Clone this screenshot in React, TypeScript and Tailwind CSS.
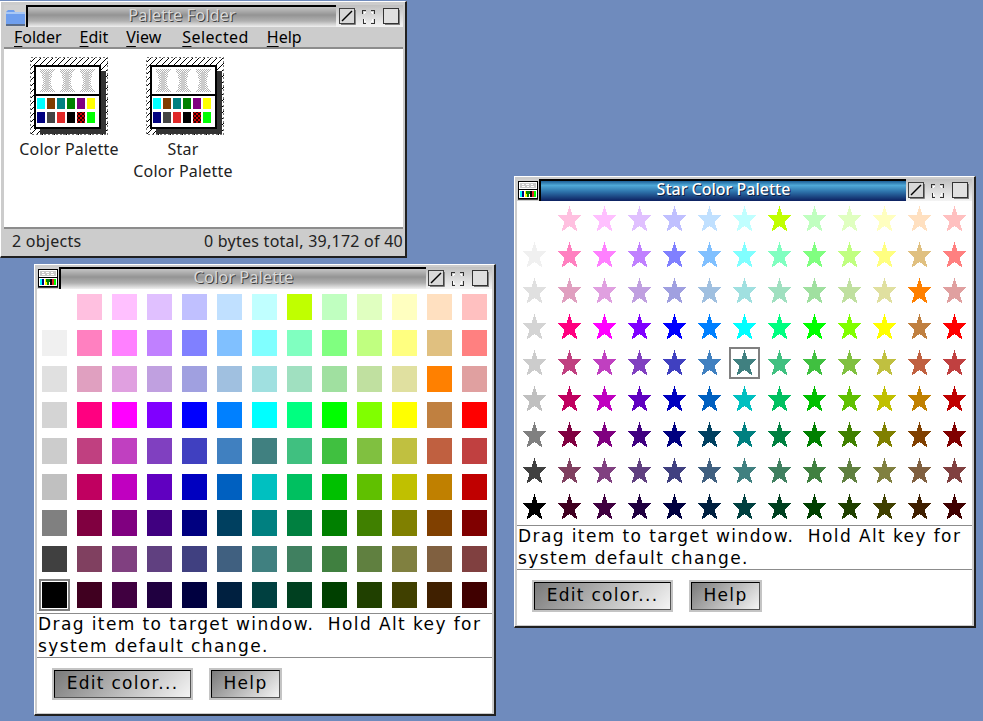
import type { ReactNode } from 'react'

const palette = [
  ['#ffffff', '#ffc0e0', '#ffc0ff', '#e0c0ff', '#c0c0ff', '#c0e0ff', '#c0ffff', '#c0ff00', '#c0ffc0', '#e0ffc0', '#ffffc0', '#ffe0c0', '#ffc0c0'],
  ['#f0f0f0', '#ff80c0', '#ff80ff', '#c080ff', '#8080ff', '#80c0ff', '#80ffff', '#80ffc0', '#80ff80', '#c0ff80', '#ffff80', '#e0c080', '#ff8080'],
  ['#e0e0e0', '#e0a0c0', '#e0a0e0', '#c0a0e0', '#a0a0e0', '#a0c0e0', '#a0e0e0', '#a0e0c0', '#a0e0a0', '#c0e0a0', '#e0e0a0', '#ff8000', '#e0a0a0'],
  ['#d4d4d4', '#ff0080', '#ff00ff', '#8000ff', '#0000ff', '#0080ff', '#00ffff', '#00ff80', '#00ff00', '#80ff00', '#ffff00', '#c08040', '#ff0000'],
  ['#cccccc', '#c04080', '#c040c0', '#8040c0', '#4040c0', '#4080c0', '#408080', '#40c080', '#40c040', '#80c040', '#c0c040', '#c06040', '#c04040'],
  ['#c0c0c0', '#c00060', '#c000c0', '#6000c0', '#0000c0', '#0060c0', '#00c0c0', '#00c060', '#00c000', '#60c000', '#c0c000', '#c08000', '#c00000'],
  ['#808080', '#800040', '#800080', '#400080', '#000080', '#004060', '#008080', '#008040', '#008000', '#408000', '#808000', '#804000', '#800000'],
  ['#404040', '#804060', '#804080', '#604080', '#404080', '#406080', '#408080', '#408060', '#408040', '#608040', '#808040', '#806040', '#804040'],
  ['#000000', '#400020', '#400040', '#200040', '#000040', '#002040', '#004040', '#004020', '#004000', '#204000', '#404000', '#402000', '#400000'],
]

const iconColors = [
  ['#00ffff', '#803c00', '#008080', '#008000', '#800080', '#ffff00'],
  ['#000080', '#444444', '#e02828', '#000000', 'url(#redcheck)', '#00ff00'],
]

function FolderGlyph() {
  return (
    <svg width="21" height="21" viewBox="0 0 21 21" className="shrink-0">
      <path d="M1 6 L3 4 H9 L10 6 H19 L20 7 V18 H1 Z" fill="#6f9fee" />
      <rect x="1" y="6" width="19" height="2" fill="#a9c8f5" />
      <rect x="1" y="18" width="19" height="2" fill="#5a6c88" />
    </svg>
  )
}

function MiniPaletteGlyph() {
  const colors = ['#00ffff', '#000080', '#ffff00', '#008000', '#000000', '#e02828', '#00ff00']
  return (
    <svg width="20" height="20" viewBox="0 0 20 20" className="shrink-0" shapeRendering="crispEdges">
      <rect x="0.5" y="1.5" width="19" height="17" fill="#ffffff" stroke="#000000" />
      <rect x="2" y="3" width="16" height="5" fill="#c8c8c8" />
      <path d="M4 4h2M8 4h3M13 4h2M4 6h3M9 6h2M13 6h3" stroke="#ffffff" />
      <rect x="0" y="9" width="20" height="1" fill="#000000" />
      {colors.map((c, i) => (
        <rect key={i} x={2 + i * 2.4} y="11" width="2" height="6" fill={c} />
      ))}
      <rect x="8" y="11" width="4" height="3" fill="#008000" />
      <rect x="0" y="19" width="20" height="1" fill="#404040" />
    </svg>
  )
}

function PaletteIcon() {
  return (
    <svg width="78" height="78" viewBox="0 0 78 78" shapeRendering="crispEdges">
      <defs>
        <pattern id="hatch" width="6" height="6" patternUnits="userSpaceOnUse">
          <rect width="6" height="6" fill="#ffffff" />
          <path d="M0 6 L6 0 M-1 1 L1 -1 M5 7 L7 5" stroke="#000000" strokeWidth="1.4" />
        </pattern>
        <pattern id="dither" width="2" height="2" patternUnits="userSpaceOnUse">
          <rect width="2" height="2" fill="#ffffff" />
          <rect width="1" height="1" fill="#b4b4b4" />
          <rect x="1" y="1" width="1" height="1" fill="#b4b4b4" />
        </pattern>
        <pattern id="redcheck" width="4" height="4" patternUnits="userSpaceOnUse">
          <rect width="4" height="4" fill="#d00000" />
          <rect width="2" height="2" fill="#200000" />
          <rect x="2" y="2" width="2" height="2" fill="#200000" />
        </pattern>
      </defs>
      <rect x="0.5" y="0.5" width="77" height="77" fill="url(#hatch)" stroke="#777777" strokeDasharray="2 2" />
      <rect x="10" y="14" width="66" height="63" fill="#333333" />
      <rect x="5" y="9" width="65" height="62" fill="#ffffff" stroke="#000000" strokeWidth="2" />
      <rect x="5" y="37" width="65" height="2" fill="#000000" />
      {[0, 1, 2].map((i) => (
        <g key={i}>
          <path
            d={`M${9 + i * 20} 12 h16 l-3 5 l-1 7 l1 7 l3 4 h-16 l3 -4 l1 -7 l-1 -7 Z`}
            fill="url(#dither)"
          />
          <rect x={15 + i * 20} y="15" width="4" height="18" fill="#cccccc" />
        </g>
      ))}
      {iconColors.map((row, r) =>
        row.map((c, i) => (
          <rect key={c + r} x={7 + i * 10} y={41 + r * 14} width="8" height="11" fill={c} />
        )),
      )}
    </svg>
  )
}

function TitleButtons() {
  return (
    <div className="flex items-center justify-end gap-[6px]">
      <svg width="17" height="17" viewBox="0 0 17 17">
        <rect x="0.5" y="0.5" width="15" height="15" fill="#d8d8d8" stroke="#404040" />
        <path d="M3 13 L13 3" stroke="#000000" strokeWidth="1.4" />
        <path d="M16.5 2 V16.5 H2" stroke="#808080" fill="none" />
      </svg>
      <svg width="13" height="15" viewBox="0 0 13 15" shapeRendering="crispEdges">
        <path d="M0 5V1H4M9 1H12V5M12 10V14H9M4 14H1V10" stroke="#333333" fill="none" />
        <path d="M2 5V3H4M9 3H10V5M10 10V12H9M4 12H2V10" stroke="#ffffff" fill="none" />
      </svg>
      <svg width="17" height="17" viewBox="0 0 17 17" shapeRendering="crispEdges" className="ml-[2px]">
        <rect x="0.5" y="0.5" width="15" height="15" fill="#e0e0e0" stroke="#333333" />
        <path d="M16.5 2 V16.5 H2" stroke="#808080" fill="none" />
      </svg>
    </div>
  )
}

function TitleBar({ title, icon, active = false, buttonsWidth }: {
  title: string
  icon: ReactNode
  active?: boolean
  buttonsWidth: string
}) {
  return (
    <div className="flex h-[22px]">
      <div className="flex w-[22px] shrink-0 items-center justify-center bg-[#d0d0d0]">{icon}</div>
      <div
        className={`flex flex-1 items-center justify-center border-l-2 border-t-2 border-black pb-[4px] ${
          active
            ? 'bg-[linear-gradient(to_bottom,#1d5f96,#4fa9d8_22%,#2c70a8_55%,#0d2060)] text-[16px] font-medium text-white [text-shadow:1px_1px_0_#102040]'
            : 'bg-[linear-gradient(to_bottom,#c4c4c4,#949494_40%,#b0b0b0_70%,#f0f0f0)] text-[16.5px] text-[#d8d8d8] [text-shadow:1px_1px_0_#404040]'
        }`}
      >
        {title}
      </div>
      <div className={`${buttonsWidth} shrink-0 bg-[linear-gradient(to_bottom,#c0c0c0,#f4f4f4)] pr-[3px] pt-[3px]`}>
        <TitleButtons />
      </div>
    </div>
  )
}

function Star({ color }: { color: string }) {
  return (
    <svg width="25" height="26" viewBox="0 0 25 26" shapeRendering="crispEdges">
      <path d="M12.5 0 L15.6 9 H25 L17.6 15.4 L20.6 26 L12.5 20 L4.4 26 L7.4 15.4 L0 9 H9.4 Z" fill={color} />
    </svg>
  )
}

function PushButton({ width, children }: { width: string; children: ReactNode }) {
  return (
    <div className={`${width} h-[32px] border-2 border-[#c4c4c4]`}>
      <div className="flex h-full items-center justify-center border border-b-[#555555] border-l-black border-r-[#555555] border-t-black bg-[linear-gradient(135deg,#7a7a7a,#f4f4f4)] text-[17px] tracking-[1.3px] text-black [font-family:'DejaVu_Sans',sans-serif]">
        {children}
      </div>
    </div>
  )
}

function PaletteWindow({ title, left, top, stars, selected, active, icon }: {
  title: string
  left: string
  top: string
  stars?: boolean
  selected: [number, number]
  active?: boolean
  icon: ReactNode
}) {
  return (
    <div className={`absolute ${left} ${top} h-[452px] w-[462px] border-b-2 border-l border-r-2 border-t border-b-[#202020] border-l-white border-r-[#202020] border-t-white bg-[#cccccc] pb-[2px] pl-[2px] pr-[2px] pt-[2px]`}>
      <TitleBar title={title} icon={icon} active={active} buttonsWidth="w-[66px]" />
      <div className="h-[424px] bg-white">
        <div className="grid grid-cols-[repeat(13,25px)] gap-x-[10px] gap-y-[10px] px-[5px] pb-[5px] pt-[5px]">
          {palette.flatMap((row, r) =>
            row.map((color, c) => {
              const isSelected = selected[0] === r && selected[1] === c
              return (
                <div key={`${r}-${c}`} className="relative h-[26px] w-[25px]">
                  {stars ? <Star color={color} /> : <div className="h-full w-full" style={{ background: color }} />}
                  {isSelected && <div className="absolute -inset-[3px] border-2 border-[#808080]" />}
                </div>
              )
            }),
          )}
        </div>
        <div className="h-[45px] whitespace-pre border-b border-t border-[#8c8c8c] px-px text-[17px] leading-[22px] tracking-[1.4px] text-black [font-family:'DejaVu_Sans',sans-serif]">
          <div className="-mt-px">Drag item to target window.  Hold Alt key for</div>
          <div>system default change.</div>
        </div>
        <div className="flex gap-[16px] pl-[15px] pt-[10px]">
          <PushButton width="w-[141px]">Edit color...</PushButton>
          <PushButton width="w-[73px]">Help</PushButton>
        </div>
      </div>
    </div>
  )
}

function U({ children }: { children: string }) {
  return <span className="underline decoration-1 underline-offset-[3px]">{children}</span>
}

export default function App() {
  return (
    <div className="relative h-[721px] w-[983px] overflow-hidden bg-[#6f8bbd] [font-family:'Noto_Sans',sans-serif]">
      {/* folder window */}
      <div className="absolute left-0 top-px h-[257px] w-[407px] border-b-2 border-l border-r-2 border-t border-b-[#202020] border-l-white border-r-[#202020] border-t-white bg-[#cccccc] pb-[2px] pl-[3px] pr-[2px] pt-[3px]">
        <TitleBar title="Palette Folder" icon={<FolderGlyph />} buttonsWidth="w-[67px]" />
        <div className="flex h-[22px] items-center gap-[18px] border-b-2 border-[#8c8c8c] pl-[10px] text-[16px] text-black">
          <span><U>F</U>older</span>
          <span><U>E</U>dit</span>
          <span><U>V</U>iew</span>
          <span className="ml-[3px] tracking-[0.4px]"><U>S</U>elected</span>
          <span><U>H</U>elp</span>
        </div>
        <div className="flex h-[178px] gap-[38px] bg-white pl-[26px] pt-[8px] text-[16px] leading-[22px] tracking-[0.2px] text-[#222222]">
          <div className="w-[78px]">
            <PaletteIcon />
            <div className="-mx-[12px] mt-[3px] whitespace-nowrap text-center">Color Palette</div>
          </div>
          <div className="w-[78px]">
            <PaletteIcon />
            <div className="-ml-[14px] -mr-[10px] mt-[3px] whitespace-nowrap text-center">Star<br />Color Palette</div>
          </div>
        </div>
        <div className="flex h-[26px] items-center justify-between overflow-hidden whitespace-nowrap border-t-2 border-[#8c8c8c] pl-[8px] text-[16px] tracking-[0.25px] text-[#222222]">
          <span>2 objects</span>
          <span>0 bytes total, 39,172 of 40</span>
        </div>
      </div>

      <PaletteWindow title="Color Palette" left="left-[34px]" top="top-[264px]" selected={[8, 0]} icon={<MiniPaletteGlyph />} />
      <PaletteWindow title="Star Color Palette" left="left-[514px]" top="top-[176px]" stars active selected={[4, 6]} icon={<MiniPaletteGlyph />} />
    </div>
  )
}
